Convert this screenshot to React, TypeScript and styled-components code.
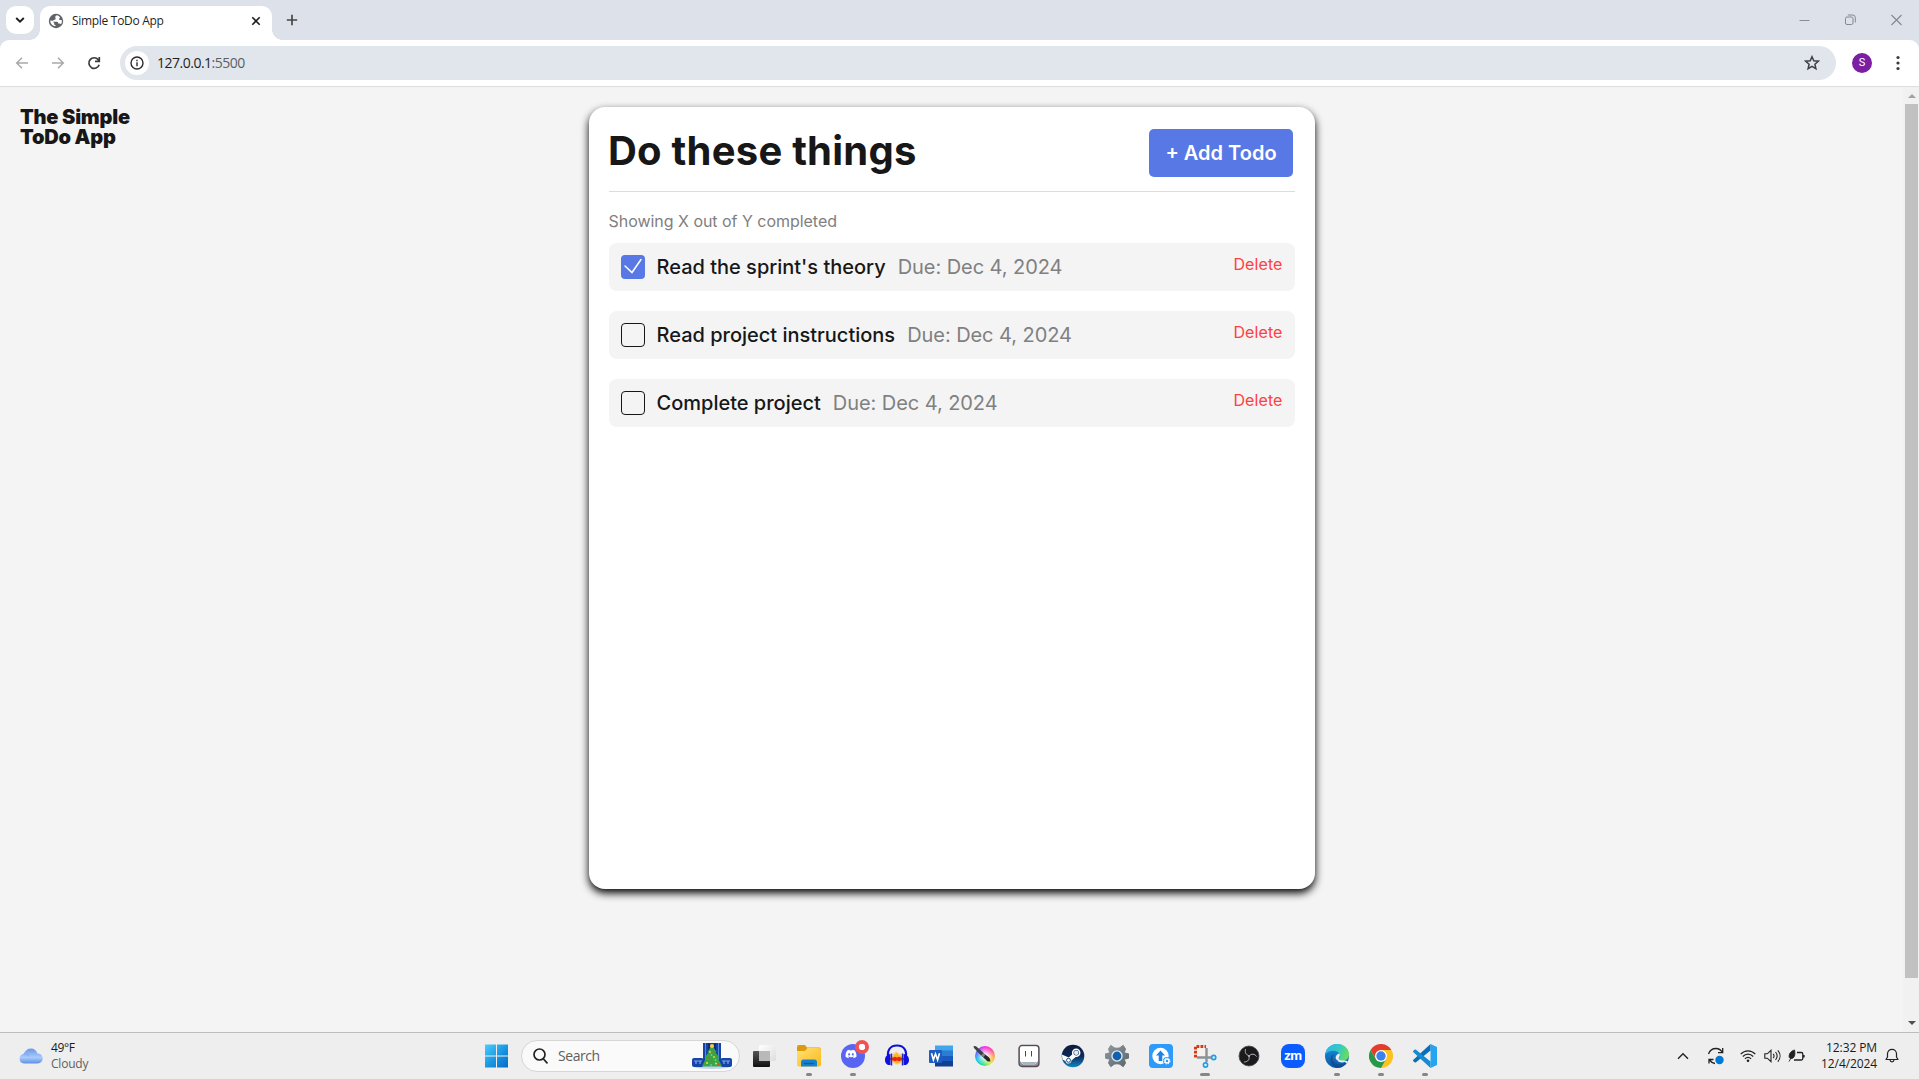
import React from "react";
import styled, { createGlobalStyle } from "styled-components";
import { FaDiscord } from "react-icons/fa";

const GlobalStyle = createGlobalStyle`
  * { box-sizing: border-box; }
  body { margin: 0; overflow: hidden; }
  button { border: 0; padding: 0; background: none; font: inherit; }
  h1, h2, p, ul { margin: 0; padding: 0; }
  svg { display: block; flex: none; }
`;

const uiFont = `"Open Sans", "Noto Sans", sans-serif`;

const Screen = styled.div`
  width: 1919px;
  height: 1079px;
  display: flex;
  flex-direction: column;
  overflow: hidden;
  background: #f4f4f4;
  font-family: Inter, sans-serif;
`;

/* ---------- browser ---------- */
const TabStrip = styled.header`
  height: 40px;
  flex: none;
  display: flex;
  align-items: flex-start;
  padding-left: 6px;
  background: #dde2ea;
  font-family: ${uiFont};
`;
const TabSearch = styled.button`
  width: 28px;
  height: 28px;
  margin-top: 6px;
  border-radius: 10px;
  background: #fff;
  display: grid;
  place-items: center;
`;
const Tab = styled.div`
  position: relative;
  width: 232px;
  height: 34px;
  margin: 6px 0 0 6px;
  padding: 0 11px 5px 8px;
  display: flex;
  align-items: center;
  background: #fff;
  border-radius: 10px 10px 0 0;
  &::before,
  &::after {
    content: "";
    position: absolute;
    bottom: 0;
    width: 10px;
    height: 10px;
  }
  &::before {
    left: -10px;
    background: radial-gradient(circle at 0 0, transparent 9.5px, #fff 10px);
  }
  &::after {
    right: -10px;
    background: radial-gradient(circle at 100% 0, transparent 9.5px, #fff 10px);
  }
`;
const TabTitle = styled.span`
  flex: 1;
  margin-left: 8px;
  font-size: 12px;
  letter-spacing: -0.3px;
  line-height: 16px;
  color: #1f1f1f;
`;
const NewTab = styled.button`
  margin: 14px 0 0 14px;
`;
const WindowControls = styled.div`
  margin: 14px 17px 0 auto;
  display: flex;
  align-items: center;
  gap: 35px;
`;
const Toolbar = styled.nav`
  height: 47px;
  flex: none;
  display: flex;
  align-items: center;
  padding: 0 13px 1px 15px;
  background: #fff;
  border-bottom: 1px solid #dcdee1;
  border-radius: 9px 9px 0 0;
  font-family: ${uiFont};
`;
const ToolbarWrap = styled.div`
  background: #dde2ea;
`;
const NavButtons = styled.div`
  display: flex;
  gap: 22px;
  margin-right: 19px;
`;
const AddressBar = styled.div`
  flex: 1;
  height: 34px;
  display: flex;
  align-items: center;
  padding: 0 16px 0 5px;
  border-radius: 17px;
  background: #e1e6ed;
`;
const SiteInfo = styled.span`
  width: 24px;
  height: 24px;
  border-radius: 50%;
  background: #fff;
  display: grid;
  place-items: center;
`;
const Url = styled.span`
  flex: 1;
  margin-left: 8px;
  font-size: 14px;
  letter-spacing: -0.5px;
  color: #1f1f1f;
  span { color: #5b5f64; }
`;
const Avatar = styled.span`
  width: 20px;
  height: 20px;
  margin: 0 18px 0 16px;
  border-radius: 50%;
  background: #7b1fa2;
  color: #fff;
  font: 11px/20px Roboto, sans-serif;
  text-align: center;
`;

/* ---------- page ---------- */
const Viewport = styled.div`
  flex: 1;
  min-height: 0;
  display: flex;
`;
const Page = styled.main`
  flex: 1;
  display: grid;
  grid-template-columns: 589px 726px 1fr;
  align-items: start;
  padding-top: 20px;
`;
const Logo = styled.p`
  margin-left: 20px;
  width: 130px;
  color: #171717;
  font-size: 20px;
  font-weight: 900;
  line-height: 20px;
  letter-spacing: -0.2px;
`;
const Card = styled.section`
  height: 782px;
  padding: 20px;
  border-radius: 16px;
  background: #fff;
  box-shadow: 0 4px 8px #000;
`;
const CardHeader = styled.div`
  height: 65px;
  display: flex;
  justify-content: space-between;
  align-items: flex-start;
  padding-right: 2px;
  border-bottom: 1px solid #dcdcdc;
`;
const Title = styled.h1`
  margin-left: -1px;
  color: #171717;
  font-size: 40px;
  font-weight: 700;
  line-height: 48px;
  letter-spacing: 0.23px;
`;
const AddButton = styled.button`
  width: 144px;
  height: 48px;
  margin-top: 2px;
  border-radius: 5px;
  background: #5878e6;
  color: #fff;
  font-size: 20px;
  font-weight: 600;
`;
const Counter = styled.p`
  margin: 19px 0 12px -0.5px;
  color: #808080;
  font-size: 16px;
  line-height: 20px;
  letter-spacing: -0.03px;
`;
const List = styled.ul`
  display: flex;
  flex-direction: column;
  gap: 20px;
  list-style: none;
`;
const Row = styled.li`
  height: 48px;
  display: flex;
  align-items: center;
  padding: 0 12px;
  border-radius: 8px;
  background: #f4f4f4;
  font-size: 20px;
  line-height: 24px;
`;
const Check = styled.span<{ $on: boolean }>`
  width: 24px;
  height: 24px;
  border-radius: 4px;
  border: ${(p) => (p.$on ? "0" : "1px solid #171717")};
  background: ${(p) => (p.$on ? "#5878e6" : "transparent")};
`;
const TaskName = styled.span`
  margin: 0 12px 0 11.5px;
  color: #171717;
  font-weight: 500;
`;
const Due = styled.span`
  flex: 1;
  color: #808080;
  letter-spacing: -0.06px;
`;
const Delete = styled.button`
  padding: 0 0.5px 5px 0;
  color: #ff4040;
  font-size: 16px;
  line-height: 19px;
  letter-spacing: 0.1px;
`;
const ScrollTrack = styled.div`
  width: 16px;
  display: flex;
  flex-direction: column;
  align-items: center;
  background: #f1f1f1;
  padding: 7px 0 7px 1px;
`;
const ScrollThumb = styled.div`
  width: 13px;
  height: 874px;
  margin: 6px 0 auto;
  background: #c1c1c1;
`;

/* ---------- taskbar ---------- */
const Taskbar = styled.footer`
  height: 47px;
  flex: none;
  display: flex;
  align-items: center;
  border-top: 1px solid #bdbdbd;
  background: #eee;
  color: #1a1a1a;
  font: 12px/16px ${uiFont};
`;
const Weather = styled.div`
  width: 474px;
  display: flex;
  align-items: center;
  padding: 0 0 0 19px;
  gap: 8px;
`;
const Stack = styled.div<{ $right?: boolean }>`
  text-align: ${(p) => (p.$right ? "right" : "left")};
  letter-spacing: ${(p) => (p.$right ? "-0.1px" : "-0.35px")};
`;
const Condition = styled.div`
  color: #606060;
  letter-spacing: -0.2px;
`;
const AppSlot = styled.div`
  position: relative;
  width: 44px;
  height: 46px;
  display: grid;
  place-items: center;
`;
const Indicator = styled.i<{ $wide?: boolean }>`
  position: absolute;
  bottom: 3px;
  left: ${(p) => (p.$wide ? 17 : 19)}px;
  width: ${(p) => (p.$wide ? 10 : 6)}px;
  height: 3px;
  border-radius: 2px;
  background: #868686;
`;
const SearchBox = styled.div`
  width: 219px;
  height: 32px;
  margin: 0 3px 0 3px;
  padding: 0 7px 0 11px;
  display: flex;
  align-items: center;
  border: 1px solid #d6d6d6;
  border-radius: 16px;
  background: #fafafa;
  color: #606060;
  font-size: 14px;
  letter-spacing: -0.45px;
  span { flex: 1; margin-left: 10px; }
`;
const Tray = styled.div`
  margin-left: auto;
  padding-right: 20px;
  display: flex;
  align-items: center;
`;
const TrayItem = styled.span<{ $gap: number }>`
  margin-left: ${(p) => p.$gap}px;
`;

const tasks = [
  { name: "Read the sprint's theory", due: "Due: Dec 4, 2024", done: true },
  { name: "Read project instructions", due: "Due: Dec 4, 2024", done: false },
  { name: "Complete project", due: "Due: Dec 4, 2024", done: false },
];

const Globe = () => (
  <svg width="16" height="16" viewBox="0 0 16 16">
    <circle cx="8" cy="8" r="7.2" fill="#5f6368" />
    <path d="M9 2.2c-1.8.5-2 1.7-1.5 2.7.5.9 0 1.7-1 1.8-1 .2-1 1.1-2.200 1.100L2.300 7.500c-.1 1.800.8 3.900 2.600 5 .9.5 1.900.7 2.600.8V12c-1 0-1.300-.6-1.300-1.300V10L4.800 8.700H9c.9 0 1.200 1 1.200 1.700h1.300c.7 0 1.100.3 1.500.8.9-1.200 1.100-2.900.7-4.200l-1.600.1c-1 0-1.200-1-.7-1.700L12 4.300C11.200 3.100 10 2.400 9 2.200Z" fill="#fff" />
  </svg>
);

const Windows = () => (
  <svg width="24" height="24" viewBox="0 0 24 24">
    <defs>
      <linearGradient id="win" x1="0" y1="0" x2="24" y2="24" gradientUnits="userSpaceOnUse">
        <stop stopColor="#4fd0ff" /><stop offset=".55" stopColor="#1795e0" /><stop offset="1" stopColor="#0569c4" />
      </linearGradient>
    </defs>
    <path d="M1 .5h11v11H1zM13 .5h11v11H13zM1 12.500h11v11H1zM13 12.500h11v11H13z" fill="url(#win)" />
  </svg>
);

const Festive = () => (
  <svg width="40" height="26" viewBox="0 0 40 26">
    <ellipse cx="20" cy="23.500" rx="18" ry="2.500" fill="#c3d2f0" />
    <path d="M11 0h18v23H11z" fill="#1745a6" />
    <path d="M13.500 0v21M26.500 0v21" stroke="#5686df" strokeWidth="1" />
    <path d="M17 0v20M23 0v20" stroke="#0b2c80" strokeWidth="2" />
    <rect y="15" width="11.500" height="9" rx="2" fill="#1745a6" />
    <rect x="28.500" y="15" width="11.500" height="9" rx="2" fill="#1745a6" />
    <path d="M2 18h8M30 18h8M4 18v3M8 18v3M32 18v3M36 18v3" stroke="#7da6ef" strokeWidth="1.200" />
    <path d="M20 2l4.500 7-1 .5 4 5-1.500.5 4 8.500H10l4-8.500-1.500-.5 4-5-1-.5z" fill="#35a843" />
    <circle cx="20" cy="3" r="2.100" fill="#ffc83c" />
    <g fill="#ffd24a"><circle cx="18" cy="9" r=".9" /><circle cx="22" cy="14" r=".9" /><circle cx="15" cy="20" r="1" /><circle cx="24" cy="20.500" r="1" /></g>
    <g fill="#e8483c"><circle cx="21.500" cy="9.500" r=".8" /><circle cx="17" cy="14.500" r=".9" /><circle cx="19.500" cy="18.500" r="1" /><circle cx="27" cy="21.500" r=".9" /></g>
    <g fill="#8dd4ff"><circle cx="19.500" cy="12" r=".8" /><circle cx="23.500" cy="17" r=".8" /><circle cx="19" cy="22" r=".8" /></g>
  </svg>
);

const TaskView = () => (
  <svg width="24" height="24" viewBox="0 0 24 24">
    <defs>
      <linearGradient id="tvd" x1="0" y1="0" x2="0" y2="1"><stop stopColor="#555" /><stop offset="1" stopColor="#111" /></linearGradient>
      <linearGradient id="tvl" x1="0" y1="0" x2="1" y2="1"><stop stopColor="#fff" /><stop offset="1" stopColor="#ddd" /></linearGradient>
    </defs>
    <rect x="0" y="7" width="17" height="16" rx="1" fill="url(#tvd)" />
    <rect x="6" y="1" width="17" height="16" rx="1" fill="url(#tvl)" />
    <path d="M6 7h11v10H6z" fill="#b9b9b9" />
  </svg>
);

const Explorer = () => (
  <svg width="24" height="24" viewBox="0 0 24 24">
    <defs><linearGradient id="fold" x1="0" y1="0" x2="1" y2="1"><stop stopColor="#ffe07a" /><stop offset="1" stopColor="#fbb916" /></linearGradient></defs>
    <path d="M0 3a2 2 0 0 1 2-2h6l2 2.500h12a2 2 0 0 1 2 2V12H0z" fill="#dc9b0c" />
    <path d="M0 7h8l2.500-3H22a2 2 0 0 1 2 2v14.500a2 2 0 0 1-2 2H2a2 2 0 0 1-2-2z" fill="url(#fold)" />
    <path d="M4 22.500V18a2.500 2.500 0 0 1 2.500-2.500h11A2.500 2.500 0 0 1 20 18v4.500z" fill="#1483cf" />
    <path d="M7.500 19.500h9" stroke="#0b5da8" strokeWidth="1.600" strokeLinecap="round" />
  </svg>
);

const Discord = () => (
  <svg width="34" height="34" viewBox="-2 -2 34 34">
    <circle cx="15" cy="15" r="12" fill="#5865f2" />
    <FaDiscord x="7" y="7" width="16" height="16" color="#fff" />
    <circle cx="24" cy="6" r="5" fill="none" stroke="#ee5457" strokeWidth="4" />
    <circle cx="24" cy="6" r="3.100" fill="#fff" />
  </svg>
);

const Audacity = () => (
  <svg width="26" height="24" viewBox="0 0 26 24">
    <path d="M5 15C2 7 6 1.500 13 1.500S24 7 21 15" fill="none" stroke="#1010d8" strokeWidth="2.200" />
    <path d="M7 15l1-3 1 1 1-5 1 3 1-4 1 3 1-2 1 4 1-3 1 4 1-1 1 3-1 3-1-1-1 3-1-2-1 3-1-2-1 2-1-3-1 2-1-3-1 1z" fill="#ffb41c" />
    <path d="M6 15l3-.8 2-1 2 1 2-1 2 1 3 .800-3 .8-2 1-2-1-2 1-2-1z" fill="#f02010" stroke="#f02010" strokeWidth="1" />
    <path d="M6.500 10v11C3 21.500 1 19 1 16s2-6 5.500-6zM19.500 10v11c3.500.5 5.500-2 5.500-5s-2-6-5.500-6z" fill="#1010e0" />
    <path d="M7.500 9.500v12M18.500 9.500v12" stroke="#2a2ab0" strokeWidth="1.500" />
  </svg>
);

const Word = () => (
  <svg width="24" height="24" viewBox="0 0 24 24">
    <path d="M6 1.500h18V7H6z" fill="#41a5ee" /><path d="M6 6.500h18V12H6z" fill="#2b7cd3" />
    <path d="M6 12h18v5.500H6z" fill="#185abd" /><path d="M6 17h18v5.500H6z" fill="#103f91" />
    <rect y="6" width="13" height="13" rx="1" fill="#1d5dbf" />
    <path d="M2.500 9.300l1.900 6.500 2.100-6 2.100 6 1.900-6.500" fill="none" stroke="#fff" strokeWidth="1.600" />
  </svg>
);

const Palette = styled.span`
  width: 20px;
  height: 20px;
  display: block;
  border-radius: 50%;
  background: radial-gradient(circle, #fff 0 5%, transparent 65%),
    conic-gradient(#ff28e0, #ff4b9c 50deg, #ffb14a 100deg, #d8ee3c 145deg, #2edb8c 195deg, #15c8ee 245deg, #5b6cff 290deg, #ff28e0);
`;
const KritaWrap = styled.span`
  display: grid;
  place-items: center;
  > * { grid-area: 1 / 1; }
`;
const Krita = () => (
  <KritaWrap>
    <Palette />
    <svg width="24" height="24" viewBox="0 0 24 24">
      <path d="M.5 2l2.500.3 7.500 6.500-2.300 3L1 4z" fill="#3c4048" />
      <path d="M10.500 9.300l5 3.700c1.500 1.200 1.800 2.600 1.800 4.500-2 .2-3.500-.3-4.500-1.800L8.500 11.800z" fill="#23262c" />
      <path d="M10.500 9.300l2 1.500-2 2.500-2-1.500z" fill="#7d818a" />
    </svg>
  </KritaWrap>
);

const Aseprite = () => (
  <svg width="24" height="24" viewBox="0 0 24 24">
    <rect x="2" y="1.500" width="20" height="21" rx="3" fill="#8b98a2" stroke="#5a4a56" strokeWidth="1.300" />
    <rect x="3" y="2.300" width="18" height="16" rx="2" fill="#fff" />
    <path d="M3.500 17.500L6 20h12l2.500-2.500" fill="none" stroke="#ccd3d8" strokeWidth="1" />
    <path d="M8.500 7v5.500M14.500 7v5.500" stroke="#4e4450" strokeWidth="1" />
  </svg>
);

const SteamBadge = styled.span`
  width: 22px;
  height: 22px;
  display: block;
  border-radius: 50%;
  svg { width: 24px; height: 24px; margin: -1px; }
`;
const Steam = () => (
  <SteamBadge>
    <svg viewBox="0 0 24 24">
      <defs><linearGradient id="stm" x1="0" y1="0" x2="0" y2="1"><stop stopColor="#101a3c" /><stop offset=".5" stopColor="#0b2a5a" /><stop offset="1" stopColor="#1486c2" /></linearGradient></defs>
      <circle cx="12" cy="12" r="11.300" fill="url(#stm)" />
      <path d="M.8 10.500l7 3 5-4.500 2.700 3.200-5 4.300c-.2 2-1.500 3-3 3-1.700 0-2.700-1-3.100-2.600L1.500 15.500z" fill="#fff" />
      <circle cx="15.200" cy="8.800" r="3.500" fill="#173765" stroke="#fff" strokeWidth="1.600" />
      <circle cx="15.200" cy="8.800" r="2.200" fill="#fff" opacity=".9" />
      <circle cx="7.500" cy="16.300" r="2" fill="none" stroke="#17508a" strokeWidth="1" />
    </svg>
  </SteamBadge>
);

const Settings = () => (
  <svg width="24" height="24" viewBox="0 0 24 24">
    <defs><linearGradient id="gear" x1="0" y1="0" x2="1" y2="1"><stop stopColor="#8f999f" /><stop offset="1" stopColor="#59646c" /></linearGradient></defs>
    <path d="M9.200 3.800L5.800 1.300 3.500 5l1.300 3.800L.5 9.800v4.400l4.300 1L3.500 19l2.300 3.700 3.400-2.500 2.800-.5 2.800.5 3.400 2.500 2.300-3.700-1.300-3.800 4.300-1V9.800l-4.300-1L20.500 5l-2.300-3.700-3.400 2.500-2.800.5z" fill="url(#gear)" stroke="url(#gear)" strokeLinejoin="round" />
    <circle cx="12" cy="12" r="5.700" fill="#e4eaee" /><circle cx="12" cy="12" r="4.400" fill="#1161b0" />
  </svg>
);

const Updater = () => (
  <svg width="24" height="24" viewBox="0 0 24 24">
    <rect width="24" height="24" rx="4" fill="#2d9bfb" />
    <circle cx="11.500" cy="12" r="8.200" fill="#fff" />
    <path d="M11.500 6.500l4.500 5h-2.700v5.500H9.700v-5.500H7z" fill="#1c83ea" />
    <circle cx="18" cy="17" r="4" fill="#2d9bfb" />
    <circle cx="18" cy="17" r="2" fill="#2d9bfb" stroke="#fff" strokeWidth="1.500" />
    <circle cx="18" cy="17" r="3" fill="none" stroke="#fff" strokeWidth="1" strokeDasharray="1.200 1.150" />
  </svg>
);

const Snip = () => (
  <svg width="24" height="24" viewBox="0 0 24 24">
    <path d="M1 1h11v11H1z" fill="#f7f1ee" />
    <path d="M2.500 13.500V2.500H13" fill="none" stroke="#d23b14" strokeWidth="3" strokeDasharray="2.800 1.200" />
    <path d="M13.500 4v14M4 13.500h15" stroke="#8b9299" strokeWidth="2.400" />
    <circle cx="20.700" cy="13.500" r="2.100" fill="none" stroke="#1a9ee8" strokeWidth="1.600" />
    <circle cx="12.500" cy="21" r="2.100" fill="none" stroke="#1a9ee8" strokeWidth="1.600" />
  </svg>
);

const Obs = () => (
  <svg width="22" height="22" viewBox="0 0 22 22">
    <circle cx="11" cy="11" r="10" fill="#1b1a1c" stroke="#4c4b4e" strokeWidth=".8" />
    <g fill="none" stroke="#b9b8ba" strokeWidth="1" strokeLinecap="round">
      <path d="M10.500 10.500c-2.500-.8-4-3-3-6" /><path d="M11.500 10.500c2-2 5-2 7 .8" /><path d="M11 11.500c.8 2.800-.8 5.300-4.500 5.500" />
    </g>
    <circle cx="11" cy="11" r="1" fill="#b9b8ba" />
  </svg>
);

const ZoomBadge = styled.span`
  width: 24px;
  height: 24px;
  border-radius: 8px;
  background: #0b5cff;
  color: #fff;
  font: 900 14px/21px Lato, sans-serif;
  letter-spacing: -0.4px;
  text-align: center;
`;

const Edge = () => (
  <svg width="24" height="24" viewBox="0 0 24 24">
    <defs>
      <linearGradient id="eg" x1="0" y1=".3" x2="1" y2=".5"><stop stopColor="#2fb8ec" /><stop offset=".55" stopColor="#33c9c4" /><stop offset="1" stopColor="#6ede55" /></linearGradient>
      <linearGradient id="eb" x1="0" y1="0" x2="0" y2="1"><stop stopColor="#1a93dc" /><stop offset="1" stopColor="#0d56a8" /></linearGradient>
    </defs>
    <circle cx="12" cy="12" r="12" fill="url(#eb)" />
    <path d="M9.200 10c-2 2-2.300 5-.5 7.500 2.300 3.300 7.500 4 13 .5.500-.3.800 0 .5.500C20 22 16 24 12.300 24 8 23.500 5.500 20 5.500 16c0-3 1.500-5.300 3.700-6z" fill="#114a8b" opacity=".75" />
    <path d="M17 15.500l5.800 1.800-1 2c-1.500-.3-1.500-1.500-1.500-1.500-3 1.200-6 .7-8-1z" fill="#eee" />
    <path d="M.2 10.500C1.200 4.200 6 0 12 0c7 0 12 5 12 10.500 0 4-3 6-6 6-2.500 0-4.300-.8-4.300-1.800 0-.8 1.300-1.200 1.300-3.200 0-2.500-2.800-4.800-6.500-4.800C5 6.700 1.500 8 .2 10.500z" fill="url(#eg)" />
    <path d="M14.500 9.500c1 2.500-.8 3.700-.8 5.200 0 .8 1 1.500 2.800 1.700-2 .9-4.500.3-5.500-1.400-1-2 .5-5 3.500-5.500z" fill="#eee" />
  </svg>
);

const Chrome = () => (
  <svg width="24" height="24" viewBox="0 0 24 24">
    <path d="M12 6h10.400A12 12 0 0 1 12 24l5.200-9z" fill="#fcc31e" />
    <path d="M1.600 6A12 12 0 0 1 22.400 6H12L6.800 15z" fill="#e33b2e" />
    <path d="M1.600 6l5.200 9 5.200 3 5.200-3L12 24A12 12 0 0 1 1.600 6z" fill="#279847" />
    <circle cx="12" cy="12" r="6" fill="#fff" /><circle cx="12" cy="12" r="4.700" fill="#3b82ec" />
  </svg>
);

const Code = () => (
  <svg width="24" height="24" viewBox="0 0 24 24">
    <path d="M17.500 0L24 3v18l-6.500 3z" fill="#25a5ef" />
    <path d="M17.500 0v6.500L3 18.300c-.5.400-1 .4-1.500 0L.4 17.200c-.5-.5-.5-1 0-1.500z" fill="#0b6fb8" />
    <path d="M17.500 24v-6.500L3 5.700c-.5-.4-1-.4-1.500 0L.4 6.800c-.5.500-.5 1 0 1.500z" fill="#168ad3" />
  </svg>
);

const apps: { icon: React.ReactNode; open?: boolean; wide?: boolean }[] = [
  { icon: <TaskView /> },
  { icon: <Explorer />, open: true },
  { icon: <Discord />, open: true },
  { icon: <Audacity /> },
  { icon: <Word /> },
  { icon: <Krita /> },
  { icon: <Aseprite /> },
  { icon: <Steam /> },
  { icon: <Settings /> },
  { icon: <Updater /> },
  { icon: <Snip />, open: true, wide: true },
  { icon: <Obs /> },
  { icon: <ZoomBadge>zm</ZoomBadge> },
  { icon: <Edge />, open: true },
  { icon: <Chrome />, open: true },
  { icon: <Code />, open: true },
];

const Browser = () => (
  <>
    <TabStrip>
      <TabSearch>
        <svg width="10" height="8" viewBox="0 0 10 8" fill="none" stroke="#1f1f1f" strokeWidth="1.900"><path d="M1.200 2L5 5.700 8.800 2" /></svg>
      </TabSearch>
      <Tab>
        <Globe />
        <TabTitle>Simple ToDo App</TabTitle>
        <svg width="10" height="10" viewBox="0 0 10 10" stroke="#1f1f1f" strokeWidth="1.600"><path d="M1.300 1.300l7.400 7.400M8.700 1.300L1.300 8.700" /></svg>
      </Tab>
      <NewTab>
        <svg width="12" height="12" viewBox="0 0 12 12" stroke="#474747" strokeWidth="1.700"><path d="M6 .8v10.400M.8 6h10.400" /></svg>
      </NewTab>
      <WindowControls>
        <svg width="11" height="12" viewBox="0 0 11 12" stroke="#8a8d91"><path d="M.5 6.500h10" /></svg>
        <svg width="11" height="12" viewBox="0 0 11 12" fill="none" stroke="#85888c"><rect x=".5" y="3" width="7.500" height="7.500" rx="1.500" /><path d="M2.800 1h5a2.500 2.500 0 0 1 2.500 2.500v5" /></svg>
        <svg width="11" height="12" viewBox="0 0 11 12" stroke="#85888c" strokeWidth="1.100"><path d="M.5 1l10 10M10.500 1l-10 10" /></svg>
      </WindowControls>
    </TabStrip>
    <ToolbarWrap>
      <Toolbar>
        <NavButtons>
          <svg width="14" height="14" viewBox="0 0 14 14" fill="none" stroke="#a9a9a9" strokeWidth="1.500"><path d="M13 7H2M7 1.700L1.700 7 7 12.300" /></svg>
          <svg width="14" height="14" viewBox="0 0 14 14" fill="none" stroke="#a9a9a9" strokeWidth="1.500"><path d="M1 7h11M7 1.700L12.300 7 7 12.300" /></svg>
          <svg width="14" height="14" viewBox="0 0 14 14" fill="none" stroke="#3c3c3c" strokeWidth="1.700"><path d="M12.200 8.800A5.300 5.300 0 1 1 11.300 3.700L12.300 5M12.300 1v4.400H8" /></svg>
        </NavButtons>
        <AddressBar>
          <SiteInfo>
            <svg width="14" height="14" viewBox="0 0 14 14" fill="none" stroke="#2b2b2b" strokeWidth="1.400"><circle cx="7" cy="7" r="6" /><path d="M7 6.200v4M7 3.700v1.500" /></svg>
          </SiteInfo>
          <Url>127.0.0.1<span>:5500</span></Url>
          <svg width="16" height="16" viewBox="0 0 16 16" fill="none" stroke="#3e4043" strokeWidth="1.500"><path d="M8 1.700l1.800 4.100 4.500.4-3.400 3 1 4.400L8 11.300l-3.900 2.300 1-4.400-3.400-3 4.500-.4z" /></svg>
        </AddressBar>
        <Avatar>S</Avatar>
        <svg width="16" height="16" viewBox="0 0 16 16" fill="#3c3c3c"><circle cx="8" cy="2.500" r="1.600" /><circle cx="8" cy="8" r="1.600" /><circle cx="8" cy="13.500" r="1.600" /></svg>
      </Toolbar>
    </ToolbarWrap>
  </>
);

const SystemTray = () => (
  <Tray>
    <svg width="12" height="8" viewBox="0 0 12 8" fill="none" stroke="#222" strokeWidth="1.400"><path d="M1 6.700l5-5 5 5" /></svg>
    <TrayItem $gap={18}>
      <svg width="18" height="18" viewBox="0 0 18 18" fill="none" stroke="#222" strokeWidth="1.300">
        <path d="M1.500 7C3 3 6 1.500 9 1.500c3 0 5 1.500 6.500 4M15.700 1v4.700H11M2 16.500v-4h4.500M2.500 13c1.500 2 3 3.200 5.500 3.500" /><circle cx="12.500" cy="13" r="4.200" fill="#0078d4" stroke="none" />
      </svg>
    </TrayItem>
    <TrayItem $gap={15}>
      <svg width="16" height="14" viewBox="0 0 16 14" fill="none" stroke="#222" strokeWidth="1.200">
        <path d="M.7 5.200C4.800.700 11.200.700 15.300 5.200M2.800 7.500c3-3.200 7.400-3.200 10.400 0M4.900 9.800c1.800-1.900 4.400-1.900 6.200 0" /><circle cx="8" cy="11.700" r="1.300" fill="#222" stroke="none" />
      </svg>
    </TrayItem>
    <TrayItem $gap={8}>
      <svg width="17" height="14" viewBox="0 0 17 14" fill="none" stroke="#222" strokeWidth="1.100">
        <path d="M.8 4.800h2.500L7 1.300v11.400L3.300 9.200H.8zM9.200 4.800c1 1.300 1 3.100 0 4.400M11.500 3c2 2.400 2 5.600 0 8M13.800 1.300c3 3.400 3 8 0 11.400" />
      </svg>
    </TrayItem>
    <TrayItem $gap={7}>
      <svg width="17" height="14" viewBox="0 0 17 14" fill="none" stroke="#222" strokeWidth="1.300">
        <path d="M9 3.500h4.300a1.500 1.500 0 0 1 1.500 1.500v4.500a1.500 1.500 0 0 1-1.500 1.500H6M16 6v2.500" />
        <path d="M1.300 8.500C.5 5 3 2 6.500 1c.8 3.500.5 6.500-1.500 8-1.300.8-3 .5-3.700-.5zM1 12.500L3 9" fill="#222" strokeWidth=".9" />
      </svg>
    </TrayItem>
    <TrayItem $gap={16}>
      <Stack $right>
        <div>12:32 PM</div>
        <div>12/4/2024</div>
      </Stack>
    </TrayItem>
    <TrayItem $gap={8}>
      <svg width="14" height="16" viewBox="0 0 14 16" fill="none" stroke="#222" strokeWidth="1.200">
        <path d="M1 11.500L2.500 9V5.800a4.500 4.500 0 0 1 9 0V9l1.500 2.500zM5 12c.3 2.500 3.700 2.500 4 0" strokeLinejoin="round" />
      </svg>
    </TrayItem>
  </Tray>
);

export default function App() {
  return (
    <Screen>
      <GlobalStyle />
      <Browser />
      <Viewport>
        <Page>
          <Logo>The Simple ToDo App</Logo>
          <Card>
            <CardHeader>
              <Title>Do these things</Title>
              <AddButton>+ Add Todo</AddButton>
            </CardHeader>
            <Counter>Showing X out of Y completed</Counter>
            <List>
              {tasks.map((t) => (
                <Row key={t.name}>
                  <Check $on={t.done}>
                    {t.done && (
                      <svg width="24" height="24" viewBox="0 0 24 24" fill="none" stroke="#fff" strokeWidth="1.500" strokeLinecap="round"><path d="M4 11l7 6.500L20 4.500" /></svg>
                    )}
                  </Check>
                  <TaskName>{t.name}</TaskName>
                  <Due>{t.due}</Due>
                  <Delete>Delete</Delete>
                </Row>
              ))}
            </List>
          </Card>
        </Page>
        <ScrollTrack>
          <svg width="8" height="4" viewBox="0 0 8 4" fill="#a3a3a3"><path d="M0 4l4-4 4 4z" /></svg>
          <ScrollThumb />
          <svg width="8" height="4" viewBox="0 0 8 4" fill="#505050"><path d="M0 0l4 4 4-4z" /></svg>
        </ScrollTrack>
      </Viewport>
      <Taskbar>
        <Weather>
          <svg width="24" height="16" viewBox="0 0 24 16">
            <defs><linearGradient id="cloud" x1="0" y1="0" x2="0" y2="1"><stop stopColor="#6b98e6" /><stop offset=".6" stopColor="#a9cbfa" /><stop offset="1" stopColor="#5f8fe2" /></linearGradient></defs>
            <path d="M5 15.500a4.800 4.800 0 0 1-.5-9.500C6 2.500 8.800.500 12 .5c3.300 0 5.700 2 6.300 5 3.200-.2 5.400 2 5.400 4.800 0 3-2.200 5.200-5 5.200z" fill="url(#cloud)" />
            <path d="M4.500 6.300C7 5.500 9 6.500 10 8.500" fill="none" stroke="#7ba6ee" />
          </svg>
          <Stack>
            <div>49°F</div>
            <Condition>Cloudy</Condition>
          </Stack>
        </Weather>
        <AppSlot><Windows /></AppSlot>
        <SearchBox>
          <svg width="15" height="16" viewBox="0 0 15 16" fill="none" stroke="#222" strokeWidth="1.700" strokeLinecap="round"><circle cx="6.500" cy="6.500" r="5.500" /><path d="M10.500 11l3.500 3.800" /></svg>
          <span>Search</span>
          <Festive />
        </SearchBox>
        {apps.map((app, i) => (
          <AppSlot key={i}>
            {app.icon}
            {app.open && <Indicator $wide={app.wide} />}
          </AppSlot>
        ))}
        <SystemTray />
      </Taskbar>
    </Screen>
  );
}
